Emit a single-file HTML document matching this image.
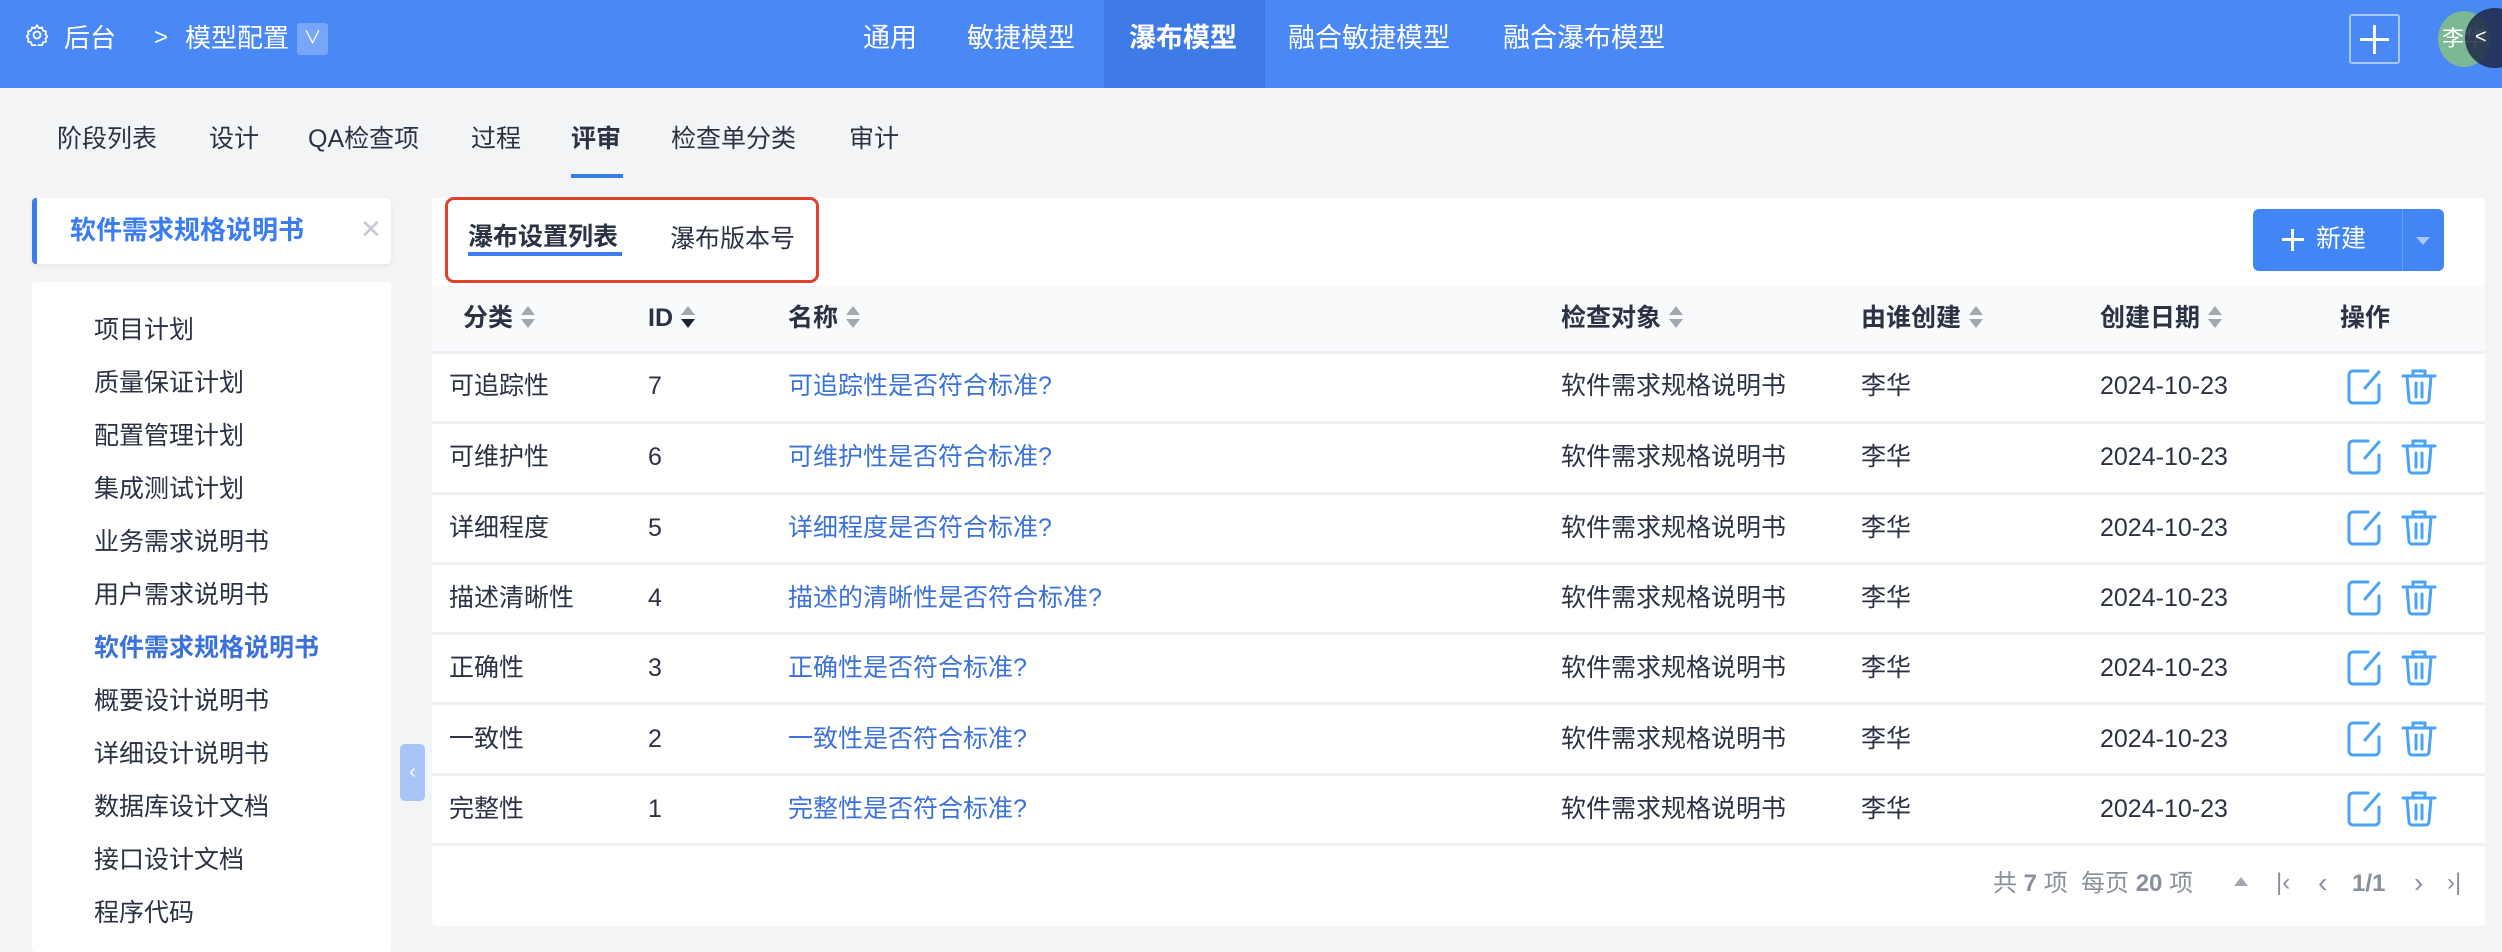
<!DOCTYPE html>
<html><head><meta charset="utf-8">
<style>
*{box-sizing:border-box;margin:0;padding:0}
body{width:2502px;height:942px;overflow:hidden;background:#f3f4f6;font-family:"Liberation Sans","Noto Sans CJK SC",sans-serif;color:#2b3244;position:relative}
.a{position:absolute;white-space:nowrap}
.top{position:absolute;left:0;top:0;width:2502px;height:88px;background:#4a88f5;color:#fff}
.top .t{position:absolute;top:0;line-height:76px;font-size:27px}
.sub{font-size:25px;top:122px;line-height:34px;color:#2b3244}
.card{position:absolute;background:#fff}
.li{position:absolute;left:94px;font-size:25px;line-height:34px;color:#2b3244}
.th{position:absolute;top:301px;font-size:25px;font-weight:bold;line-height:34px;color:#2b3244}
.td{position:absolute;font-size:25px;line-height:34px;color:#2b3244}
.lk{color:#3b72d9}
.sort{display:inline-block;vertical-align:middle;margin-left:8px;width:14px;height:26px;position:relative;top:-2px}
.sort:before{content:"";position:absolute;left:0;top:2px;border:7px solid transparent;border-bottom:9px solid #a3a7b0;border-top:0}
.sort:after{content:"";position:absolute;left:0;top:15px;border:7px solid transparent;border-top:9px solid #a3a7b0;border-bottom:0}
.sort.d:after{border-top-color:#1f2533}
.line{position:absolute;left:432px;width:2053px;height:3px;background:#eef0f3}
</style></head><body>
<div class="top">
  <svg class="a" style="left:26px;top:24px" width="22" height="22" viewBox="0 0 22 22" fill="none" stroke="#fff" stroke-width="1.8"><circle cx="11" cy="11" r="3.5"/><path d="M11 1.5l2 2.5 3-.5 1 3 3 1-.5 3 2 2-2 2 .5 3-3 1-1 3-3-.5-2 2.5-2-2.5-3 .5-1-3-3-1 .5-3-2-2 2-2-.5-3 3-1 1-3 3 .5z"/></svg>
  <div class="t" style="left:64px;font-size:26px">后台</div>
  <div class="t" style="left:154px;font-size:24px">&gt;</div>
  <div class="t" style="left:185px;font-size:26px">模型配置</div>
  <div class="a" style="left:297px;top:23px;width:31px;height:32px;background:#77a6f8;border-radius:3px;text-align:center;line-height:30px;font-size:18px">&#8744;</div>
  <div class="t" style="left:863px">通用</div>
  <div class="t" style="left:967px">敏捷模型</div>
  <div class="a" style="left:1104px;top:0;width:161px;height:88px;background:#3f7be6"></div>
  <div class="t" style="left:1129px;font-weight:bold">瀑布模型</div>
  <div class="t" style="left:1288px">融合敏捷模型</div>
  <div class="t" style="left:1503px">融合瀑布模型</div>
  <div class="a" style="left:2349px;top:14px;width:51px;height:50px;border:2px solid #a9c6fb;border-radius:3px"></div>
  <div class="a" style="left:2360px;top:38px;width:29px;height:3px;background:#fff"></div>
  <div class="a" style="left:2373px;top:25px;width:3px;height:29px;background:#fff"></div>
  <div class="a" style="left:2438px;top:11px;width:52px;height:56px;border-radius:50%;background:#7db894;color:#fff;font-size:22px;line-height:56px;padding-left:4px">李华</div>
  <div class="a" style="left:2465px;top:8px;width:60px;height:60px;border-radius:50%;background:rgba(30,40,70,.85);color:#fff;font-size:20px;line-height:58px;padding-left:10px">&lt;</div>
</div>

<div class="a sub" style="left:57px">阶段列表</div>
<div class="a sub" style="left:209px">设计</div>
<div class="a sub" style="left:308px">QA检查项</div>
<div class="a sub" style="left:471px">过程</div>
<div class="a sub" style="left:571px;font-weight:bold">评审</div>
<div class="a sub" style="left:671px">检查单分类</div>
<div class="a sub" style="left:849px">审计</div>
<div class="a" style="left:571px;top:174px;width:52px;height:4px;background:#3b7cf0"></div>

<div class="card" style="left:32px;top:198px;width:359px;height:66px;border-left:5px solid #3b7cf0;border-radius:4px;box-shadow:0 2px 4px rgba(0,0,0,.06)"></div>
<div class="a" style="left:70px;top:213px;font-size:26px;line-height:34px;font-weight:bold;color:#3b7cf0">软件需求规格说明书</div>
<div class="a" style="left:360px;top:212px;font-size:26px;line-height:34px;color:#c4c8d0">&#10005;</div>

<div class="card" style="left:32px;top:282px;width:359px;height:670px;border-radius:4px"></div>
<div class="li" style="top:313px">项目计划</div>
<div class="li" style="top:366px">质量保证计划</div>
<div class="li" style="top:419px">配置管理计划</div>
<div class="li" style="top:472px">集成测试计划</div>
<div class="li" style="top:525px">业务需求说明书</div>
<div class="li" style="top:578px">用户需求说明书</div>
<div class="li" style="top:631px;font-weight:bold;color:#3b72d9">软件需求规格说明书</div>
<div class="li" style="top:684px">概要设计说明书</div>
<div class="li" style="top:737px">详细设计说明书</div>
<div class="li" style="top:790px">数据库设计文档</div>
<div class="li" style="top:843px">接口设计文档</div>
<div class="li" style="top:896px">程序代码</div>
<div class="a" style="left:400px;top:744px;width:25px;height:57px;background:#a8c5f7;border-radius:5px;color:#fff;font-size:20px;line-height:57px;text-align:center">&lsaquo;</div>

<div class="card" style="left:432px;top:198px;width:2053px;height:728px;border-radius:4px"></div>
<div class="a" style="left:432px;top:286px;width:2053px;height:66px;background:#f9fafc"></div>
<div class="a" style="left:445px;top:197px;width:374px;height:86px;border:3px solid #e1402d;border-radius:9px"></div>
<div class="a" style="left:468px;top:220px;font-size:25px;line-height:34px;font-weight:bold">瀑布设置列表</div>
<div class="a" style="left:468px;top:252px;width:154px;height:4px;background:#3b7cf0"></div>
<div class="a" style="left:670px;top:222px;font-size:25px;line-height:34px">瀑布版本号</div>

<div class="a" style="left:2253px;top:209px;width:191px;height:62px;background:#4285f4;border-radius:6px"></div>
<div class="a" style="left:2402px;top:209px;width:1px;height:62px;background:#6a9ef6"></div>
<div class="a" style="left:2282px;top:238px;width:22px;height:3px;background:#fff"></div>
<div class="a" style="left:2291px;top:229px;width:3px;height:22px;background:#fff"></div>
<div class="a" style="left:2316px;top:222px;font-size:25px;line-height:34px;color:#fff">新建</div>
<div class="a" style="left:2416px;top:237px;border:7px solid transparent;border-top:8px solid #a9c6fb"></div>

<div class="th" style="left:463px">分类<span class="sort"></span></div>
<div class="th" style="left:648px">ID<span class="sort d"></span></div>
<div class="th" style="left:788px">名称<span class="sort"></span></div>
<div class="th" style="left:1561px">检查对象<span class="sort"></span></div>
<div class="th" style="left:1861px">由谁创建<span class="sort"></span></div>
<div class="th" style="left:2100px">创建日期<span class="sort"></span></div>
<div class="th" style="left:2340px">操作</div>

<div class="line" style="top:351px"></div>
<div class="line" style="top:421px"></div>
<div class="line" style="top:492px"></div>
<div class="line" style="top:562px"></div>
<div class="line" style="top:632px"></div>
<div class="line" style="top:702px"></div>
<div class="line" style="top:773px"></div>
<div class="line" style="top:843px"></div>

<div class="td" style="left:449px;top:369px">可追踪性</div><div class="td" style="left:648px;top:369px">7</div><div class="td lk" style="left:788px;top:369px">可追踪性是否符合标准?</div><div class="td" style="left:1561px;top:369px">软件需求规格说明书</div><div class="td" style="left:1861px;top:369px">李华</div><div class="td" style="left:2100px;top:369px">2024-10-23</div>
<div class="td" style="left:449px;top:440px">可维护性</div><div class="td" style="left:648px;top:440px">6</div><div class="td lk" style="left:788px;top:440px">可维护性是否符合标准?</div><div class="td" style="left:1561px;top:440px">软件需求规格说明书</div><div class="td" style="left:1861px;top:440px">李华</div><div class="td" style="left:2100px;top:440px">2024-10-23</div>
<div class="td" style="left:449px;top:511px">详细程度</div><div class="td" style="left:648px;top:511px">5</div><div class="td lk" style="left:788px;top:511px">详细程度是否符合标准?</div><div class="td" style="left:1561px;top:511px">软件需求规格说明书</div><div class="td" style="left:1861px;top:511px">李华</div><div class="td" style="left:2100px;top:511px">2024-10-23</div>
<div class="td" style="left:449px;top:581px">描述清晰性</div><div class="td" style="left:648px;top:581px">4</div><div class="td lk" style="left:788px;top:581px">描述的清晰性是否符合标准?</div><div class="td" style="left:1561px;top:581px">软件需求规格说明书</div><div class="td" style="left:1861px;top:581px">李华</div><div class="td" style="left:2100px;top:581px">2024-10-23</div>
<div class="td" style="left:449px;top:651px">正确性</div><div class="td" style="left:648px;top:651px">3</div><div class="td lk" style="left:788px;top:651px">正确性是否符合标准?</div><div class="td" style="left:1561px;top:651px">软件需求规格说明书</div><div class="td" style="left:1861px;top:651px">李华</div><div class="td" style="left:2100px;top:651px">2024-10-23</div>
<div class="td" style="left:449px;top:722px">一致性</div><div class="td" style="left:648px;top:722px">2</div><div class="td lk" style="left:788px;top:722px">一致性是否符合标准?</div><div class="td" style="left:1561px;top:722px">软件需求规格说明书</div><div class="td" style="left:1861px;top:722px">李华</div><div class="td" style="left:2100px;top:722px">2024-10-23</div>
<div class="td" style="left:449px;top:792px">完整性</div><div class="td" style="left:648px;top:792px">1</div><div class="td lk" style="left:788px;top:792px">完整性是否符合标准?</div><div class="td" style="left:1561px;top:792px">软件需求规格说明书</div><div class="td" style="left:1861px;top:792px">李华</div><div class="td" style="left:2100px;top:792px">2024-10-23</div>

<svg class="a" style="left:2340px;top:365px" width="110" height="440" viewBox="0 0 110 440" fill="none" stroke="#4aa3f5" stroke-width="3" stroke-linecap="round">
<defs><g id="ic">
<path d="M28 4H13a4 4 0 0 0-4 4v24a4 4 0 0 0 4 4h22a4 4 0 0 0 4-4V18"/><path d="M39 5L25 21"/>
<path d="M63 9h32M73 9V4h12v5M67 9l2 24a3 3 0 0 0 3 3h14a3 3 0 0 0 3-3l2-24M76 16v14M82 16v14"/>
</g></defs>
<use href="#ic" y="2"/><use href="#ic" y="72"/><use href="#ic" y="143"/><use href="#ic" y="213"/><use href="#ic" y="283"/><use href="#ic" y="354"/>
</svg>
<svg class="a" style="left:2340px;top:789px" width="110" height="44" viewBox="0 0 110 44" fill="none" stroke="#4aa3f5" stroke-width="3" stroke-linecap="round">
<path d="M28 4H13a4 4 0 0 0-4 4v24a4 4 0 0 0 4 4h22a4 4 0 0 0 4-4V18"/><path d="M39 5L25 21"/>
<path d="M63 9h32M73 9V4h12v5M67 9l2 24a3 3 0 0 0 3 3h14a3 3 0 0 0 3-3l2-24M76 16v14M82 16v14"/>
</svg>

<div class="a" style="left:1993px;top:868px;font-size:24px;line-height:32px;color:#8a8f9c">共 <b>7</b> 项 &nbsp;每页 <b>20</b> 项</div>
<div class="a" style="left:2234px;top:877px;border:7px solid transparent;border-bottom:9px solid #a3a7b0;border-top:0"></div>
<div class="a" style="left:2276px;top:866px;font-size:24px;line-height:34px;color:#8a8f9c">|&lsaquo;</div>
<div class="a" style="left:2318px;top:866px;font-size:28px;line-height:34px;color:#8a8f9c">&lsaquo;</div>
<div class="a" style="left:2352px;top:868px;font-size:24px;line-height:32px;color:#8a8f9c;font-weight:bold">1/1</div>
<div class="a" style="left:2414px;top:866px;font-size:28px;line-height:34px;color:#8a8f9c">&rsaquo;</div>
<div class="a" style="left:2447px;top:866px;font-size:24px;line-height:34px;color:#8a8f9c">&rsaquo;|</div>
</body></html>
